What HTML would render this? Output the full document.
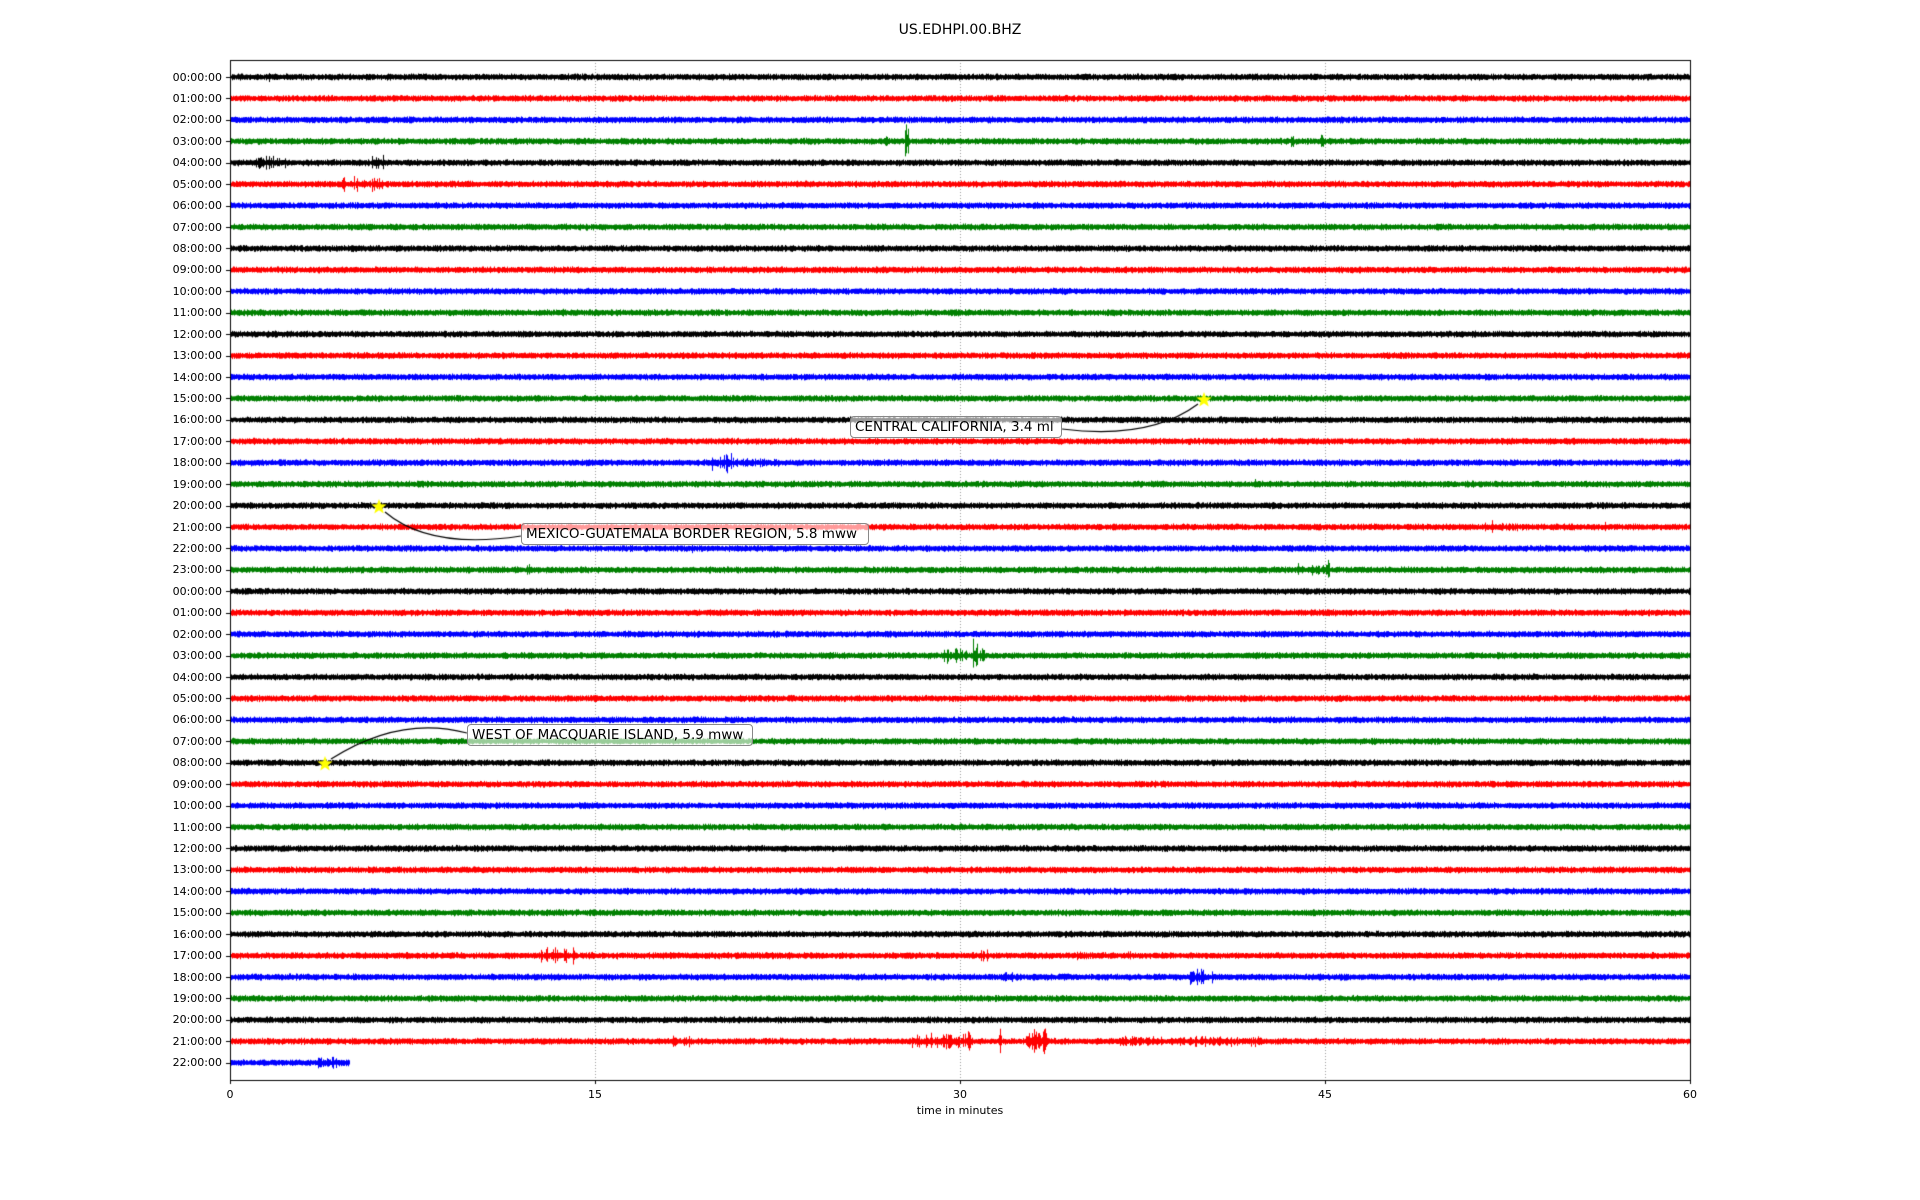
<!DOCTYPE html>
<html><head><meta charset="utf-8"><style>
html,body{margin:0;padding:0;background:#fff;width:1920px;height:1200px;overflow:hidden}
#c{position:absolute;left:0;top:0}
.t{position:absolute;font-family:"DejaVu Sans","Liberation Sans",sans-serif;color:#000;white-space:nowrap}
.box{position:absolute;font-family:"DejaVu Sans","Liberation Sans",sans-serif;font-size:13.5px;background:rgba(255,255,255,0.6);border:1px solid #888;border-radius:4px;box-sizing:border-box;padding:0 4px;line-height:20px;white-space:nowrap;overflow:hidden}
</style></head><body>
<canvas id="c" width="1920" height="1200"></canvas>
<div class="t" style="left:0;width:1920px;text-align:center;top:22px;font-size:14px">US.EDHPI.00.BHZ</div>
<div id="labels"></div>
<div class="t" style="left:0;width:1920px;text-align:center;top:1104px;font-size:11px">time in minutes</div>
<div class="box" style="left:850px;top:416px;width:212px;height:22px">CENTRAL CALIFORNIA, 3.4 ml</div>
<div class="box" style="left:521px;top:523px;width:348px;height:22px">MEXICO-GUATEMALA BORDER REGION, 5.8 mww</div>
<div class="box" style="left:467px;top:724px;width:286px;height:22px">WEST OF MACQUARIE ISLAND, 5.9 mww</div>
<script>
var L=230,R=1690,T=60,B=1080,Y0=77,DY=21.43;
var cv=document.getElementById('c'),g=cv.getContext('2d');
var s=12345;function rnd(){s=(s*16807)%2147483647;return s/2147483647;}
function X(m){return L+m/60*(R-L);}
g.strokeStyle='#999';g.lineWidth=1;g.setLineDash([1,2]);
[15,30,45].forEach(function(m){var x=Math.round(X(m))+0.5;g.beginPath();g.moveTo(x,T);g.lineTo(x,B);g.stroke();});
g.setLineDash([]);
var cols=['#000','#f00','#00f','#008000'];
var ev={0:[[1.56,1.7,7]],3:[[27.7,27.9,22],[26.9,27,8],[43.6,44,6],[44.8,45,9]],4:[[1,2.3,8],[5.8,6.3,9],[55.7,55.8,4]],5:[[4.6,6.5,9],[25.4,25.5,4]],11:[[13.6,13.7,5]],15:[[40.5,41.5,3]],17:[[2,2.1,4]],18:[[19.8,20.6,13],[20.6,22.6,6],[12.3,12.5,3]],19:[[16.2,16.3,6],[27.5,27.6,10],[22.3,22.4,4],[32.9,33,4],[41.8,41.9,6],[42.1,42.2,8]],20:[[25.8,25.9,4],[59.8,59.9,5]],21:[[51.8,51.9,10],[51.5,53,5],[56.5,56.6,6]],22:[[5.5,5.7,4],[18.9,19,6]],23:[[12.2,12.3,6],[13.9,14,4],[19.6,19.7,5],[21.8,21.9,4],[43.8,45.2,8],[45.1,45.2,15],[49,49.3,3],[58,58.2,3]],25:[[3.8,4,5]],27:[[29.3,31,9],[30.5,30.7,18]],28:[[38.6,38.7,5]],34:[[26.9,27,5]],41:[[12.7,14.3,10],[14.5,23,4],[30.8,31.5,8],[34.8,35,6],[36.9,37,6],[38.2,38.4,5],[48,48.2,5]],42:[[20.3,20.4,5],[31.5,32.5,6],[39.4,40.5,9]],45:[[18.1,19,7],[22.5,22.7,4],[28,30.5,11],[31.6,31.7,20],[32.7,33.6,14],[36.5,42.5,6],[45.6,45.7,4]],46:[[3.5,4.6,7]]};
for(var i=0;i<47;i++){
 var y=Y0+i*DY;g.fillStyle=cols[i%4];
 var end=(i==46)?4.9:60,xe=X(end);
 var E=ev[i]||[];
 for(var x=L;x<xe;x++){
  var m=(x-L)/(R-L)*60,a=2.4+rnd()*1.3;
  for(var k=0;k<E.length;k++){if(m>=E[k][0]&&m<=E[k][1]){var v=E[k][2]*(rnd()<0.35?(0.6+0.4*rnd()):(0.2+0.25*rnd()));if(v>a)a=v;}}
  var up=a*(0.6+0.4*rnd()),dn=a*(0.6+0.4*rnd());
  g.fillRect(x,y-up,1,up+dn);
 }
 g.fillStyle='#000';g.fillRect(L-4,Math.round(y),4,1);
}
g.strokeStyle='#000';g.lineWidth=1;g.strokeRect(L+0.5,T+0.5,R-L,B-T);
[0,15,30,45,60].forEach(function(m){g.fillRect(Math.round(X(m)),B,1,4);});
g.strokeStyle='#000';g.lineWidth=1.2;
g.beginPath();g.moveTo(1198,404);g.quadraticCurveTo(1150,440,1062,429);g.stroke();
g.beginPath();g.moveTo(385,512);g.quadraticCurveTo(430,550,521,536);g.stroke();
g.beginPath();g.moveTo(331,759);g.quadraticCurveTo(400,715,467,733);g.stroke();
function star(cx,cy,r){g.fillStyle='#ff0';g.beginPath();for(var k=0;k<10;k++){var rr=k%2?r*0.42:r,an=-Math.PI/2+k*Math.PI/5;g.lineTo(cx+rr*Math.cos(an),cy+rr*Math.sin(an));}g.closePath();g.fill();}
star(1204,400,8);star(379,507,8);star(325,764,8);
var h='',lb=document.getElementById('labels');
for(var i=0;i<47;i++){var hr=i<24?i:i-24;var t=(hr<10?'0':'')+hr+':00:00';
 h+='<div class="t" style="left:150px;width:72px;text-align:right;font-size:11px;top:'+(Y0+i*DY-6.5)+'px">'+t+'</div>';}
[0,15,30,45,60].forEach(function(m){h+='<div class="t" style="left:'+(X(m)-20)+'px;width:40px;text-align:center;font-size:11px;top:1088px">'+m+'</div>';});
lb.innerHTML=h;
</script>
</body></html>
